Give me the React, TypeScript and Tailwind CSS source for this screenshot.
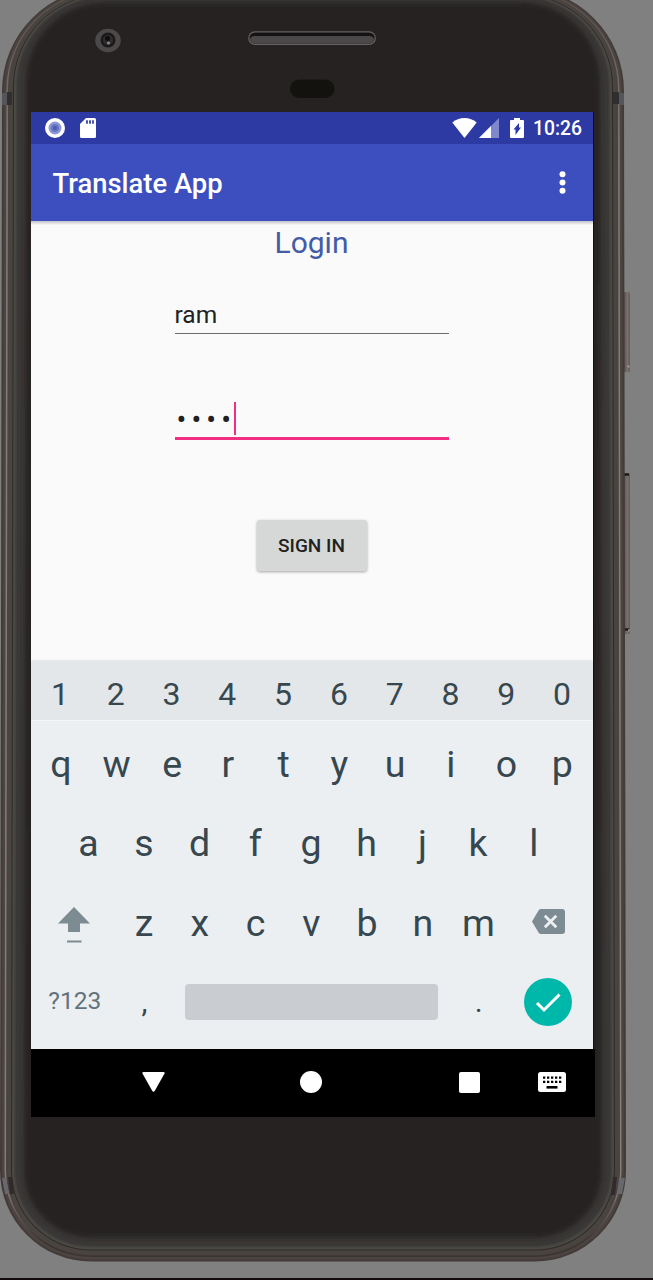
import React from "react";

type Layer = { inset: number; color: string };

const bodyLayers: Layer[] = [
  { inset: 0, color: "#433b38" },
  { inset: 2, color: "#4c4440" },
  { inset: 4.5, color: "url(#shine)" },
  { inset: 6, color: "#494340" },
  { inset: 7.5, color: "#4a4440" },
  { inset: 11, color: "#2e2a28" },
  { inset: 12, color: "#4b4844" },
  { inset: 14, color: "#42413e" },
  { inset: 15.5, color: "#393836" },
];

/* Outline of the handset, slightly wider at the bottom, shrunk by `i`. */
function outline(i: number): string {
  const lt = 2 + i;
  const rt = 624 - i;
  const lb = i;
  const rb = 626 - i;
  const top = -12 + i * 0.6;
  const bottom = 1261.5 - i;
  const r = 103 - i;
  const q = 91 - i;
  return `M${lt} ${top + r}A${r} ${r} 0 0 1 ${lt + r} ${top}H${rt - r}A${r} ${r} 0 0 1 ${rt} ${top + r}L${rb} ${bottom - q}A${q} ${q} 0 0 1 ${rb - q} ${bottom}H${lb + q}A${q} ${q} 0 0 1 ${lb} ${bottom - q}Z`;
}

function Handset() {
  return (
    <svg className="absolute inset-0" width="653" height="1280" viewBox="0 0 653 1280" aria-hidden="true">
      <defs>
        <filter id="soft" x="-5%" y="-5%" width="110%" height="110%">
          <feGaussianBlur stdDeviation="2.5" />
        </filter>
        <linearGradient id="shine" gradientUnits="userSpaceOnUse" x1="0" x2="0" y1="0" y2="1262">
          <stop offset="0" stopColor="#5a524e" />
          <stop offset="0.12" stopColor="#857c79" />
          <stop offset="0.94" stopColor="#857c79" />
          <stop offset="0.985" stopColor="#3a3330" />
        </linearGradient>
        <linearGradient id="key" x1="0" x2="1" y1="0" y2="0">
          <stop offset="0" stopColor="#4d4644" />
          <stop offset="0.6" stopColor="#7a7270" />
          <stop offset="1" stopColor="#625b58" />
        </linearGradient>
      </defs>
      <rect x="623" y="292" width="7" height="80" rx="1.5" fill="url(#key)" />
      <rect x="623" y="473" width="7" height="161" rx="1.5" fill="url(#key)" />
      <path d="M624 474.5h5M625 629.500h4" stroke="#1f1b1a" strokeWidth="2.500" />
      <path d="M627.500 366.500h2M628 630.500h1.500" stroke="#a79f9c" strokeWidth="2" />
      {bodyLayers.map((l) => (
        <path key={l.inset} d={outline(l.inset)} fill={l.color} />
      ))}
      <path d={outline(24)} fill="#272324" filter="url(#soft)" />
      <path d="M2 93h5v12h-5zM619 93h5v12h-5z" fill="#54565b" />
      <path d="M7 92h5v13H7zM613 92h6v12h-6z" fill="#302e2f" />
      <path d="M8 1177h4l2 17h-4zM613 1177h4l-2 18h-4z" fill="#302b2a" />
      <path d="M619 1178h6l-3 16h-5zM2 1178h4l3 16H5z" fill="#68676b" />
      <ellipse cx="108" cy="40.500" rx="12.800" ry="11.700" fill="#4b4949" />
      <circle cx="108" cy="40" r="7.500" fill="#1c191a" />
      <circle cx="108" cy="40" r="5" fill="#312d2e" />
      <circle cx="107.500" cy="38.500" r="2.500" fill="#0e0c0d" />
      <circle cx="108.500" cy="43" r="1.500" fill="#8c8988" />
      <rect x="248.800" y="31.800" width="126.500" height="12.500" rx="6.200" fill="#151313" stroke="#646262" strokeWidth="1.300" />
      <path d="M250 38.500q1-2.500 4-2.500h116q3 0 4 2.500-.5 5.200-5 5.200H255q-4.500 0-5-5.200z" fill="#4a4848" />
      <rect x="290" y="79.500" width="44.500" height="18.500" rx="9" fill="#14120e" />
    </svg>
  );
}

function StatusBar() {
  return (
    <div className="flex h-8 items-center bg-[#2e3aa4] pl-[14px] pr-[11px] text-white">
      <svg width="20" height="20" viewBox="0 0 20 20">
        <circle cx="10" cy="10" r="10" fill="#fff" />
        <circle cx="10" cy="10" r="6.500" fill="#8f98d3" />
        <circle cx="10" cy="10" r="4" fill="#6974c2" />
        <circle cx="10" cy="10" r="2" fill="#4e5bb5" />
      </svg>
      <svg className="ml-[15px]" width="16" height="20" viewBox="0 0 16 20">
        <path d="M6 0h8.500Q16 0 16 1.500v17q0 1.500-1.500 1.500h-13Q0 20 0 18.500V6z" fill="#fff" />
        <path d="M7 2.300v3.500M10 2.300v3.500M13 2.300v3.500" stroke="#2e3aa4" strokeWidth="1.700" />
      </svg>
      <svg className="ml-auto" width="25" height="20" viewBox="0 0 25 20">
        <path d="M12.500 20 .300 4.500Q5.500 0 12.500 0t12.200 4.500z" fill="#fff" />
      </svg>
      <svg className="ml-[2px]" width="20" height="20" viewBox="0 0 20 20">
        <path d="M0 20 20 0v20z" fill="#7f88cc" />
        <path d="M0 20 12 8v12z" fill="#fff" />
      </svg>
      <svg className="ml-[11px]" width="14" height="20" viewBox="0 0 14 20">
        <path d="M4 0h6v2h3q1 0 1 1v16q0 1-1 1H1q-1 0-1-1V3q0-1 1-1h3z" fill="#fff" />
        <path d="M9 5v4.500h2L5.500 17v-5.500h-2z" fill="#2e3aa4" />
      </svg>
      <span className="ml-[9px] pt-[2px] text-[19.300px] font-medium leading-[30px]">10:26</span>
    </div>
  );
}

function LoginForm() {
  return (
    <main className="flex h-[440px] flex-col items-center bg-[#fafafa] pr-px">
      <div className="h-1 w-[562px] self-start bg-linear-to-b from-[#c2c2c6] to-[#fafafa]" />
      <h1 className="text-[30px] leading-9 text-[#435ca6]">Login</h1>
      <div className="mt-[37px] h-9 w-[274px] border-b border-[#6b6b6b] text-[24.500px] leading-[34px] text-[#212121]">
        ram
      </div>
      <div className="mt-[68px] flex h-[38px] w-[274px] border-b-[3px] border-[#f02e82] text-[#212121]">
        <span className="w-[59px] whitespace-nowrap pl-[2px] text-[29px] leading-[36px] tracking-[5.100px]">••••</span>
        <span className="h-[33px] w-[2.500px] shrink-0 bg-[#f02e82]" />
      </div>
      <button className="mt-20 h-[51px] w-[110px] rounded-[3px] bg-[#d6d8d7] pt-[2px] text-[19px] font-medium text-[#212121] shadow-[0_1px_3px_rgba(0,0,0,0.35)]">
        SIGN IN
      </button>
    </main>
  );
}

function Letters({ keys }: { keys: string }) {
  return (
    <>
      {keys.split("").map((k) => (
        <span key={k} className="flex-[2] text-center">
          {k}
        </span>
      ))}
    </>
  );
}

function Keyboard() {
  return (
    <section className="h-[388px] bg-[#ebeff2] text-[37.500px] text-[#37474f]">
      <div className="flex h-[60px] items-center border-b border-[#f3f5f6] bg-[#e3e7ea] pl-[1px] pr-[3px] pt-[6px] text-[32px] shadow-[0_-2px_1px_-1px_rgba(225,229,232,0.8)]">
        <Letters keys="1234567890" />
      </div>
      <div className="mt-1 flex h-[79px] items-center pl-[2px] pr-[3px]">
        <Letters keys="qwertyuiop" />
      </div>
      <div className="flex h-[79px] items-center pl-[29.500px] pr-[31.500px]">
        <Letters keys="asdfghjkl" />
      </div>
      <div className="flex h-20 items-center pl-[1.500px] pr-[3px]">
        <span className="flex flex-[3] justify-center pt-1">
          <svg width="32" height="36" viewBox="0 0 32 36">
            <path d="M16 0 32 16.500H22V25H10V16.500H0z" fill="#7d8b92" />
            <path d="M9 34.500h14.500" stroke="#7d8b92" strokeWidth="2" />
          </svg>
        </span>
        <Letters keys="zxcvbnm" />
        <span className="flex flex-[3] justify-center pb-[3px]">
          <svg width="33" height="25" viewBox="0 0 33 25">
            <path d="M9 0h21q3 0 3 3v19q0 3-3 3H9q-1.500 0-2.300-1.200L0 12.500 6.700 1.200Q7.500 0 9 0z" fill="#7d8b92" />
            <path d="m12.800 6.700 11.500 11.600m0-11.600L12.800 18.300" stroke="#ebeff2" strokeWidth="2.800" />
          </svg>
        </span>
      </div>
      <div className="flex h-[77px] items-center pl-[2px] pr-[3px]">
        <span className="flex-[3] text-center text-[24.500px] text-[#62727a]">?123</span>
        <span className="flex-[2] text-center text-[30px]">,</span>
        <span className="flex-[10]">
          <span className="mx-[13px] block h-9 rounded-[4px] bg-[#c9cdd1]" />
        </span>
        <span className="flex-[2] text-center text-[30px]">.</span>
        <span className="flex flex-[3] justify-center">
          <svg width="48" height="48" viewBox="0 0 48 48">
            <circle cx="24" cy="24" r="24" fill="#00b8a9" />
            <path d="m13 25 7 7 15.500-15.500" fill="none" stroke="#fff" strokeWidth="3" />
          </svg>
        </span>
      </div>
    </section>
  );
}

const dotColumns = [5, 9, 13, 17, 21];

function NavigationBar() {
  return (
    <nav className="flex h-[68px] w-[564px] items-center bg-black pb-[2px] pl-[111px] pr-[29px]">
      <svg width="23" height="20" viewBox="0 0 23 20">
        <path d="M1.500 0h20q1.500 0 1 1.500L12.700 19q-1.200 1.500-2.400 0L.500 1.500Q0 0 1.500 0z" fill="#fff" />
      </svg>
      <span className="ml-[135px] size-[22px] rounded-full bg-white" />
      <span className="ml-[137px] size-[21px] rounded-[2px] bg-white" />
      <svg className="ml-auto" width="28" height="20" viewBox="0 0 28 20">
        <rect width="28" height="20" rx="2.500" fill="#fff" />
        {dotColumns.map((x) => (
          <path key={x} d={`M${x} 4.500h2.300v2.300h-2.300zM${x} 8.800h2.300v2.300h-2.300z`} fill="#000" />
        ))}
        <path d="M8.500 14h11v2.600h-11z" fill="#000" />
      </svg>
    </nav>
  );
}

export default function App() {
  return (
    <div className="relative h-[1280px] w-[653px] overflow-hidden border-b-2 border-[#120b0b] bg-[#808080] font-['Roboto',sans-serif]">
      <Handset />
      <div className="relative pl-[31px] pt-28">
        <div className="w-[562px] shadow-[1px_0_0_#111]">
          <StatusBar />
          <header className="flex h-[77px] items-center justify-between bg-[#3d4fbe] pl-[21.500px] pr-[27px] text-white">
            <span className="pt-[4px] text-[27.400px] font-medium">Translate App</span>
            <svg width="7" height="23" viewBox="0 0 7 23">
              <circle cx="3.500" cy="3.200" r="3" fill="#fff" />
              <circle cx="3.500" cy="11.500" r="3" fill="#fff" />
              <circle cx="3.500" cy="19.800" r="3" fill="#fff" />
            </svg>
          </header>
          <LoginForm />
          <Keyboard />
          <NavigationBar />
        </div>
      </div>
    </div>
  );
}
